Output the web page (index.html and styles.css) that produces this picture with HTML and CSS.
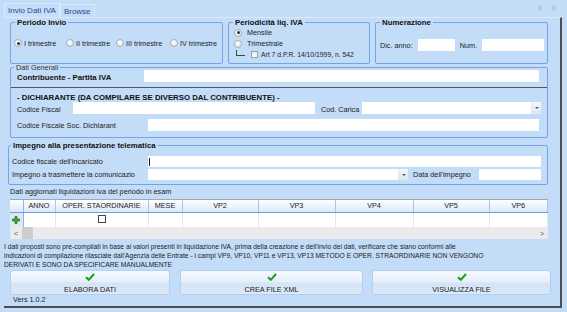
FILE: index.html
```html
<!DOCTYPE html>
<html lang="it">
<head>
    <meta charset="UTF-8">
    <title>Invio Dati IVA</title>
    <link rel="stylesheet" href="styles.css">
</head>
<body>
    <div class="tabbar">
        <div class="tab active">Invio Dati IVA</div>
        <div class="tab">Browse</div>
        <div class="tab-arrows">
            <svg width="5" height="6" viewBox="0 0 5 6"><path d="M4 0.5 L0.8 3 L4 5.5 Z" fill="none" stroke="#a3b3c6" stroke-width="0.8"/></svg>
            <svg width="5" height="6" viewBox="0 0 5 6"><path d="M1 0.5 L4.2 3 L1 5.5 Z" fill="none" stroke="#a3b3c6" stroke-width="0.8"/></svg>
        </div>
    </div>

    <div class="page">
        <!-- top row: periodo / periodicita / numerazione -->
        <div class="row-top">
            <div class="group g-periodo">
                <div class="group-title">Periodo Invio</div>
                <div class="periodi">
                    <label class="radio"><span class="dot checked"></span>I trimestre</label>
                    <label class="radio"><span class="dot"></span>II trimestre</label>
                    <label class="radio"><span class="dot"></span>III trimestre</label>
                    <label class="radio"><span class="dot"></span>IV trimestre</label>
                </div>
            </div>
            <div class="group g-periodicita">
                <div class="group-title">Periodicità liq. IVA</div>
                <label class="radio line"><span class="dot checked"></span>Mensile</label>
                <label class="radio line"><span class="dot"></span>Trimestrale</label>
                <div class="line art7">
                    <span class="tree"></span>
                    <span class="check"></span>
                    Art 7 d.P.R. 14/10/1999, n. 542
                </div>
            </div>
            <div class="group g-numerazione">
                <div class="group-title">Numerazione</div>
                <div class="num-row">
                    <span>Dic. anno:</span>
                    <input class="field w-anno" type="text">
                    <span>Num.</span>
                    <input class="field w-num" type="text">
                </div>
            </div>
        </div>

        <!-- dati generali -->
        <div class="group g-generali">
            <div class="group-title plain">Dati Generali</div>
            <div class="form-row contrib">
                <span class="lbl bold w-contrib">Contribuente - Partita IVA</span>
                <input class="field w-piva" type="text">
            </div>
            <div class="dichiarante">
                <div class="section-title">- DICHIARANTE (DA COMPILARE SE DIVERSO DAL CONTRIBUENTE) -</div>
                <div class="form-row end">
                    <span class="lbl w-cf">Codice Fiscal</span>
                    <input class="field w-cfin" type="text">
                    <span class="lbl w-carica">Cod. Carica</span>
                    <div class="select w-caricasel"><span class="arrow"></span></div>
                </div>
                <div class="form-row soc">
                    <span class="lbl w-soc">Codice Fiscale Soc. Dichiarant</span>
                    <input class="field w-socin" type="text">
                </div>
            </div>
        </div>

        <!-- impegno -->
        <div class="group g-impegno">
            <div class="group-title">Impegno alla presentazione telematica</div>
            <div class="form-row imp1">
                <span class="lbl w-imp">Codice fiscale dell'incaricato</span>
                <div class="field w-impin"><span class="caret"></span></div>
            </div>
            <div class="form-row imp2">
                <span class="lbl w-imp2">Impegno a trasmettere la comunicazio</span>
                <div class="select w-impsel"><span class="arrow"></span></div>
                <span class="lbl w-data">Data dell'impegno</span>
                <input class="field w-datain" type="text">
            </div>
        </div>

        <!-- griglia liquidazioni -->
        <div class="grid-label">Dati aggiornati liquidazioni iva del periodo in esam</div>
        <div class="grid">
            <table>
                <colgroup>
                    <col style="width:13px"><col style="width:32px"><col style="width:93px"><col style="width:34px">
                    <col style="width:76px"><col style="width:77px"><col style="width:78px"><col style="width:76px"><col>
                </colgroup>
                <thead>
                    <tr>
                        <th class="rowhead"></th>
                        <th>ANNO</th>
                        <th>OPER. STAORDINARIE</th>
                        <th>MESE</th>
                        <th>VP2</th>
                        <th>VP3</th>
                        <th>VP4</th>
                        <th>VP5</th>
                        <th>VP6</th>
                    </tr>
                </thead>
                <tbody>
                    <tr>
                        <td class="rowhead">
                            <svg width="8" height="8" viewBox="0 0 8 8"><path d="M3 0.5 H5 V3 H7.5 V5 H5 V7.5 H3 V5 H0.5 V3 H3 Z" fill="#3fae2a" stroke="#1e6b14" stroke-width="0.7"/></svg>
                        </td>
                        <td></td>
                        <td class="center"><span class="check big"></span></td>
                        <td></td><td></td><td></td><td></td><td></td><td></td>
                    </tr>
                </tbody>
            </table>
            <div class="hscroll">
                <span class="sarrow">&lt;</span>
                <span class="thumb"></span>
                <span class="sarrow right">&gt;</span>
            </div>
        </div>

        <p class="note">I dati proposti sono pre-compilati in base ai valori presenti in liquidazione IVA, prima della creazione e dell'invio dei dati, verificare che siano conformi alle<br>indicazioni di compilazione rilasciate dall'Agenzia delle Entrate - i campi VP9, VP10, VP11 e VP13, VP13 METODO E OPER. STRAORDINARIE NON VENGONO<br>DERIVATI E SONO DA SPECIFICARE MANUALMENTE</p>

        <div class="buttons">
            <button class="btn b1" type="button">
                <svg width="10" height="8" viewBox="0 0 10 8"><path d="M1 4.2 L3.8 6.8 L9 1" fill="none" stroke="#16a016" stroke-width="2"/></svg>
                <span>ELABORA DATI</span>
            </button>
            <button class="btn b2" type="button">
                <svg width="10" height="8" viewBox="0 0 10 8"><path d="M1 4.2 L3.8 6.8 L9 1" fill="none" stroke="#16a016" stroke-width="2"/></svg>
                <span>CREA FILE XML</span>
            </button>
            <button class="btn b3" type="button">
                <svg width="10" height="8" viewBox="0 0 10 8"><path d="M1 4.2 L3.8 6.8 L9 1" fill="none" stroke="#16a016" stroke-width="2"/></svg>
                <span>VISUALIZZA FILE</span>
            </button>
        </div>
        <div class="version">Vers 1.0.2</div>
    </div>
</body>
</html>
```

FILE: styles.css
```css
* {
    box-sizing: border-box;
}
body {
    margin: 0;
    width: 567px;
    height: 312px;
    overflow: hidden;
    background: #c3dcf8;
    font-family: "Liberation Sans", Arial, sans-serif;
    font-size: 7.25px;
    color: #1c1c1c;
}

/* tabs */
.tabbar {
    display: flex;
    align-items: flex-end;
    height: 17px;
    padding-left: 4px;
}
.tab {
    height: 13px;
    padding: 0 3px;
    line-height: 13px;
    font-size: 8px;
    color: #2b4a92;
    border: 1px solid #dce9fa;
    border-bottom: none;
}
.tab.active {
    height: 14px;
    background: #c6defa;
}
.tab-arrows {
    display: flex;
    gap: 10px;
    align-self: flex-start;
    margin: 5px 10px 0 auto;
}

.page {
    margin-left: 4px;
    width: 558px;
    height: 291px;
    padding-left: 6px;
    border-top: 1px solid #dce9fa;
    border-right: 2px solid #4d4d4d;
    border-bottom: 2px solid #4d4d4d;
}

/* group boxes */
.group {
    border: 1px solid #74a4e8;
    border-radius: 2px;
}
.group-title {
    width: max-content;
    margin: -5px 0 0 4px;
    padding: 0 2px;
    background: #c3dcf8;
    line-height: 9px;
    font-size: 7.8px;
    font-weight: bold;
    color: #111;
}
.group-title.plain {
    margin-left: 3px;
    font-weight: normal;
    font-size: 7.25px;
    color: #333;
}

.row-top {
    display: flex;
    gap: 5px;
    height: 42px;
    margin-top: 4px;
}
.g-periodo { width: 213px; }
.g-periodicita { width: 142px; }
.g-numerazione { width: 173px; }

.radio {
    display: flex;
    align-items: center;
    gap: 2px;
    white-space: nowrap;
}
.dot {
    width: 8px;
    height: 8px;
    flex: none;
    border: 1px solid #a9aeb5;
    border-radius: 50%;
    background: radial-gradient(circle at 40% 35%, #ffffff, #dde2e8);
    display: flex;
    align-items: center;
    justify-content: center;
}
.dot.checked::after {
    content: "";
    width: 3px;
    height: 3px;
    border-radius: 50%;
    background: #333;
}

.periodi {
    display: flex;
    width: 208px;
    margin-top: 11px;
    padding-left: 3px;
    height: 10px;
}
.periodi .radio:nth-child(1) { width: 52px; }
.periodi .radio:nth-child(2) { width: 50px; }
.periodi .radio:nth-child(3) { width: 54px; }

.g-periodicita .line {
    height: 11px;
    padding-left: 5px;
}
.g-periodicita .radio {
    gap: 5px;
}
.art7 {
    display: flex;
    align-items: center;
    font-size: 6.8px;
}
.tree {
    width: 9px;
    height: 6px;
    margin: -4px 6px 0 2px;
    border-left: 1px solid #444;
    border-bottom: 1px solid #444;
}
.check {
    width: 7px;
    height: 7px;
    margin-right: 3px;
    border: 1px solid #9a9fa6;
    background: linear-gradient(#e9ecef, #ffffff);
}
.check.big {
    display: inline-block;
    width: 8px;
    height: 8px;
    margin: 0;
    border-color: #444;
    background: #fff;
}

.num-row {
    display: flex;
    align-items: center;
    gap: 5px;
    margin-top: 12px;
    padding-left: 4px;
}
.field {
    height: 12px;
    padding: 0;
    border: none;
    background: #fff;
    font: inherit;
}
.w-anno { width: 37px; }
.w-num { width: 62px; }

/* dati generali */
.g-generali {
    margin-top: 3px;
    width: 538px;
}
.form-row {
    display: flex;
}
.form-row.end {
    align-items: flex-end;
}
.lbl {
    display: block;
    white-space: nowrap;
    flex: none;
    color: #222;
}
.lbl.bold {
    font-weight: bold;
    font-size: 7.8px;
    color: #111;
}
.contrib {
    align-items: flex-end;
    margin-top: -2px;
    padding-left: 6px;
}
.w-contrib { width: 127px; }
.w-piva { width: 395px; }

.dichiarante {
    margin-top: 5px;
    padding: 0 0 6px 6px;
    border-top: 1px solid #555;
}
.section-title {
    margin-top: 5px;
    line-height: 9px;
    font-size: 7.8px;
    font-weight: bold;
    color: #111;
}
.w-cf { width: 56px; }
.w-cfin { width: 242px; }
.w-carica { width: 41px; margin-left: 6px; }
.w-caricasel { width: 179px; }
.soc {
    align-items: center;
    margin-top: 5px;
}
.w-soc { width: 131px; }
.w-socin { width: 391px; }

.select {
    height: 12px;
    background: #fff;
    display: flex;
    justify-content: flex-end;
}
.arrow {
    width: 10px;
    height: 100%;
    background: linear-gradient(#f4f7fb, #dfe6ef);
    border-left: 1px solid #e6ebf1;
    display: flex;
    align-items: center;
    justify-content: center;
}
.arrow::after {
    content: "";
    border-left: 2px solid transparent;
    border-right: 2px solid transparent;
    border-top: 2px solid #4a5b73;
}

/* impegno */
.g-impegno {
    margin: 7px 0 0 -2px;
    width: 540px;
    padding-bottom: 4px;
}
.g-impegno .group-title {
    margin-left: 2px;
}
.g-impegno .form-row {
    align-items: center;
    padding-left: 3px;
}
.imp1 { margin-top: 6px; }
.imp2 { margin-top: 2px; }
.w-imp, .w-imp2 { width: 136px; }
.w-impin, .w-impsel, .w-datain { height: 11px; }
.w-impin { width: 393px; display: flex; align-items: center; }
.caret {
    width: 1px;
    height: 8px;
    margin-left: 1px;
    background: #222;
}
.w-impsel { width: 260px; }
.w-data { width: 66px; margin-left: 5px; }
.w-datain { width: 62px; }

/* grid */
.grid-label {
    margin-top: 3px;
    line-height: 8px;
    white-space: nowrap;
}
.grid {
    width: 538px;
    margin-top: 3px;
    border-top: 1px solid #a0a8b4;
    background: #fff;
}
.grid table {
    width: 100%;
    border-collapse: collapse;
    table-layout: fixed;
}
.grid th {
    height: 12px;
    padding: 0;
    font-weight: normal;
    font-size: 7.25px;
    color: #222;
    background: linear-gradient(#ffffff, #dbe8f8);
    border-right: 1px solid #a9c6ec;
    border-bottom: 1px solid #6f9edd;
}
.grid td {
    height: 15px;
    padding: 0;
    border-right: 1px solid #dfe6ee;
}
.grid .rowhead {
    background: #dbe8f8;
    border-right: 1px solid #8fb3e6;
    text-align: center;
}
.grid th.rowhead {
    background: linear-gradient(#ffffff, #dbe8f8);
}
.grid td.rowhead svg {
    display: block;
    margin: 0 auto;
}
.grid .center {
    text-align: center;
}
.hscroll {
    display: flex;
    align-items: center;
    height: 12px;
    background: #ebebeb;
    color: #555;
}
.sarrow {
    width: 12px;
    text-align: center;
    font-size: 7px;
}
.sarrow.right {
    margin-left: auto;
}
.thumb {
    width: 11px;
    height: 12px;
    background: #cdcdcd;
}

/* note and buttons */
.note {
    margin: 3px 0 0 -6px;
    line-height: 9px;
    font-size: 6.7px;
    color: #1c1c1c;
    white-space: nowrap;
}
.buttons {
    display: flex;
    margin-top: 1px;
}
.btn {
    height: 25px;
    padding: 2px 0 0;
    border: 1px solid #b7cfee;
    border-radius: 3px;
    background: linear-gradient(#f5f9fe, #e5eefa 48%, #d5e4f6 52%, #dae8f8);
    font: inherit;
    color: #222;
    display: flex;
    flex-direction: column;
    align-items: center;
    gap: 4px;
}
.b1 { width: 160px; }
.b2 { width: 183px; margin-left: 10px; }
.b3 { width: 179px; margin-left: 9px; }
.version {
    margin-top: 1px;
    padding-left: 3px;
    line-height: 8px;
}
```
